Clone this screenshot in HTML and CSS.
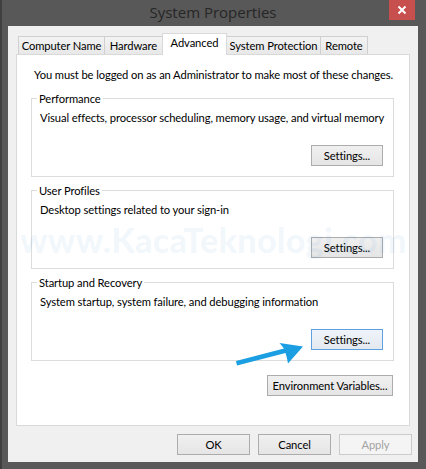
FILE: index.html
```html
<!DOCTYPE html>
<html lang="en">
<head>
<meta charset="utf-8">
<title>System Properties</title>
<link rel="stylesheet" href="styles.css">
</head>
<body>
<div class="window">
  <div class="titlebar">
    <h1 class="title">System Properties</h1>
    <button class="close" aria-label="Close">
      <svg width="10" height="10" viewBox="0 0 10 10"><path d="M1.5 1.5 L8.5 8.5 M8.5 1.5 L1.5 8.5" stroke="#fff" stroke-width="2" fill="none"/></svg>
    </button>
  </div>
  <div class="client">
    <div class="tabs">
      <div class="tab t-name">Computer Name</div>
      <div class="tab t-hw">Hardware</div>
      <div class="tab t-adv active">Advanced</div>
      <div class="tab t-sp">System Protection</div>
      <div class="tab t-rem">Remote</div>
    </div>
    <div class="panel">
      <p class="intro">You must be logged on as an Administrator to make most of these changes.</p>
      <fieldset class="group">
        <legend>Performance</legend>
        <p class="desc">Visual effects, processor scheduling, memory usage, and virtual memory</p>
        <div class="row"><button class="btn">Settings...</button></div>
      </fieldset>
      <fieldset class="group">
        <legend>User Profiles</legend>
        <p class="desc">Desktop settings related to your sign-in</p>
        <div class="row"><button class="btn">Settings...</button></div>
      </fieldset>
      <fieldset class="group">
        <legend>Startup and Recovery</legend>
        <p class="desc">System startup, system failure, and debugging information</p>
        <div class="row"><button class="btn focused">Settings...</button></div>
      </fieldset>
      <div class="row env"><button class="btn wide">Environment Variables...</button></div>
    </div>
    <div class="actions">
      <button class="btn act">OK</button>
      <button class="btn act">Cancel</button>
      <button class="btn act disabled">Apply</button>
    </div>
  </div>
  <div class="watermark" aria-hidden="true">www.KacaTeknologi.com</div>
  <svg class="arrow" width="80" height="32" viewBox="230 336 80 32">
    <path d="M236 361 L284 348.5 Q282 346 279.5 343 L303 346.5 L288 363.5 Q287 357.5 285.5 353 L237 365.5 Z" fill="#1b9fe2"/>
  </svg>
</div>
</body>
</html>
```
FILE: styles.css
```css
* { box-sizing: border-box; }
html, body { margin: 0; padding: 0; }
body {
  background: #575757;
  font-family: Lato, "Liberation Sans", Arial, sans-serif;
  font-size: 11.2px;
  letter-spacing: -0.1px;
  color: #000;
}
.window {
  position: relative;
  width: 426px;
  height: 469px;
  background: #585858;
  display: flex;
  flex-direction: column;
  box-shadow: inset 2px 0 0 #3f3f3f;
  overflow: hidden;
}
.titlebar {
  height: 26px;
  display: grid;
  grid-template-columns: 1fr auto 1fr;
  align-items: start;
}
.title {
  grid-column: 2;
  margin: 0;
  font-family: "Open Sans", "Liberation Sans", sans-serif;
  font-weight: normal;
  font-size: 15px;
  letter-spacing: 0;
  line-height: 24px;
  color: #262626;
}
.close {
  grid-column: 3;
  justify-self: end;
  margin-right: 11px;
  width: 26px;
  height: 20px;
  padding: 0;
  border: 0;
  background: #c7504f;
  display: flex;
  align-items: center;
  justify-content: center;
}
.client {
  flex: 1;
  margin: 0 8px 7px;
  background: #f0f0f0;
  padding: 7px 8px 7px 8px;
  display: flex;
  flex-direction: column;
}
.tabs {
  display: flex;
  align-items: flex-end;
  height: 21px;
  padding-left: 2px;
  position: relative;
  z-index: 1;
}
.tab {
  height: 18px;
  border: 1px solid #cfcfcf;
  border-bottom: 0;
  background: linear-gradient(#f3f3f3, #e8e8e8);
  line-height: 17px;
  text-align: center;
  white-space: nowrap;
  margin-left: -1px;
}
.t-name { width: 87px; margin-left: 0; }
.t-hw { width: 59px; }
.t-adv { width: 65px; }
.t-sp { width: 95px; }
.t-rem { width: 48px; }
.tab.active {
  height: 22px;
  background: #fff;
  border-color: #d9d9d9;
  margin-bottom: -1px;
  line-height: 18px;
  position: relative;
}
.panel {
  height: 372px;
  border: 1px solid #d9d9d9;
  background: #fff;
  padding: 12px 15px 0 14px;
}
.intro {
  margin: 0 0 0 3px;
  line-height: 15px;
  white-space: nowrap;
}
.group {
  margin: 9px 0 0;
  border: 1px solid #dcdcdc;
  padding: 4px 10px 10px 8px;
  min-width: 0;
}
.group + .group { margin-top: 6px; }
.group legend {
  padding: 0 2px;
  margin-left: -3px;
  line-height: 15px;
}
.desc {
  margin: 0;
  line-height: 15px;
  white-space: nowrap;
}
.row {
  display: flex;
  justify-content: flex-end;
  margin-top: 20px;
}
.btn {
  width: 72px;
  height: 21px;
  padding: 0;
  border: 1px solid #acacac;
  background: linear-gradient(#f0f0f0, #e5e5e5);
  font-family: inherit;
  font-size: 11.2px;
  letter-spacing: -0.1px;
  color: #000;
  white-space: nowrap;
}
.btn.focused {
  border-color: #5ea1e3;
  background: linear-gradient(#eef4fa, #e3e9ef);
}
.row.env { margin-top: 14px; }
.btn.wide { width: 126px; margin-right: 1px; }
.actions {
  display: flex;
  justify-content: flex-end;
  gap: 8px;
  margin-top: 8px;
  margin-right: -2px;
}
.btn.act { width: 73px; }
.btn.disabled {
  color: #a3a3a3;
  border-color: #cbcbcb;
  background: #f4f4f4;
}
.watermark {
  position: absolute;
  left: 20px;
  top: 219px;
  font-family: Lato, "Noto Sans", sans-serif;
  font-weight: 900;
  font-size: 34px;
  letter-spacing: 0.3px;
  color: rgba(40, 130, 205, 0.08);
  pointer-events: none;
  white-space: nowrap;
}
.arrow {
  position: absolute;
  left: 230px;
  top: 336px;
  pointer-events: none;
}
```
